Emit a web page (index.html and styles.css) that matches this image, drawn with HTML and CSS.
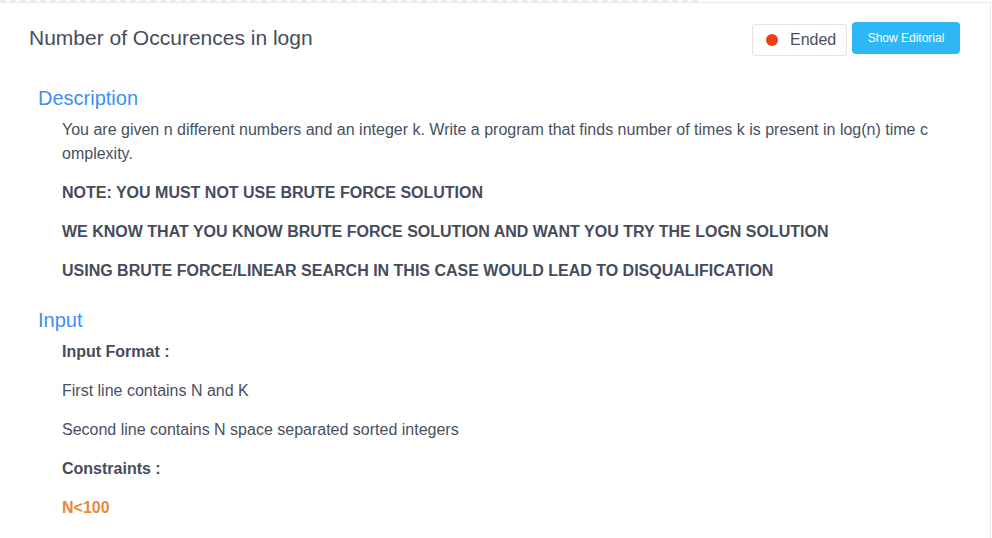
FILE: index.html
```html
<!DOCTYPE html>
<html>
<head>
<meta charset="utf-8">
<link rel="stylesheet" href="styles.css">
</head>
<body>
<div class="topline"></div>
<div class="card">
  <div class="header">
    <h1 class="title">Number of Occurences in logn</h1>
    <div class="actions">
      <div class="status"><span class="dot"></span><span class="status-text">Ended</span></div>
      <button class="btn">Show Editorial</button>
    </div>
  </div>
  <div class="section">
    <h2 class="heading">Description</h2>
    <div class="body">
      <p>You are given n different numbers and an integer k. Write a program that finds number of times k is present in log(n) time complexity.</p>
      <p class="strong">NOTE: YOU MUST NOT USE BRUTE FORCE SOLUTION</p>
      <p class="strong">WE KNOW THAT YOU KNOW BRUTE FORCE SOLUTION AND WANT YOU TRY THE LOGN SOLUTION</p>
      <p class="strong">USING BRUTE FORCE/LINEAR SEARCH IN THIS CASE WOULD LEAD TO DISQUALIFICATION</p>
    </div>
  </div>
  <div class="section">
    <h2 class="heading">Input</h2>
    <div class="body">
      <p class="strong">Input Format :</p>
      <p>First line contains N and K</p>
      <p>Second line contains N space separated sorted integers</p>
      <p class="strong">Constraints :</p>
      <p class="strong orange">N&lt;100</p>
    </div>
  </div>
</div>
</body>
</html>
```

FILE: styles.css
```css
html, body {
  margin: 0;
  padding: 0;
  background: #ffffff;
  font-family: "Liberation Sans", Arial, sans-serif;
  color: #495060;
}

.topline {
  width: 698px;
  height: 0;
  border-top: 2px dashed #ececec;
}

.card {
  box-sizing: border-box;
  width: 991px;
  min-height: 536px;
  border-top: 1px solid #e8eaec;
  border-right: 1px solid #e8eaec;
  padding: 19px 57px 0 0;
}

.header {
  display: flex;
  justify-content: space-between;
  align-items: center;
  height: 32px;
  margin-right: -27px;
}

.title {
  margin: 0 0 0 29px;
  font-size: 21px;
  font-weight: normal;
  line-height: 28px;
  color: #464c5b;
}

.actions {
  display: flex;
  align-items: flex-start;
  gap: 5px;
  height: 32px;
}

.status {
  box-sizing: border-box;
  display: flex;
  align-items: center;
  width: 95px;
  height: 32px;
  margin-top: 2px;
  padding-left: 13px;
  border: 1px solid #e5e5e5;
  border-radius: 3px;
  background: #fff;
}

.dot {
  width: 12px;
  height: 12px;
  border-radius: 50%;
  background: #ed3f14;
  margin-right: 12px;
}

.status-text {
  font-size: 16px;
  color: #495060;
}

.btn {
  width: 108px;
  height: 32px;
  border: none;
  border-radius: 4px;
  background: #2db7f5;
  color: #fff;
  font-family: "Liberation Sans", Arial, sans-serif;
  font-size: 12px;
  padding: 0 0 1px;
}

.section {
  margin-top: 23px;
  padding-left: 38px;
}

.header + .section {
  margin-top: 30px;
}

.heading {
  margin: 0 0 6px;
  font-size: 20px;
  font-weight: normal;
  line-height: 28px;
  color: #3d8ff7;
}

.body {
  padding-left: 24px;
}

.body p {
  margin: 0 0 15px;
  font-size: 16px;
  line-height: 24px;
  word-break: break-all;
}

.body p.strong {
  font-weight: bold;
  color: #464c5b;
}

.body p.orange {
  color: #e8883a;
}
```
